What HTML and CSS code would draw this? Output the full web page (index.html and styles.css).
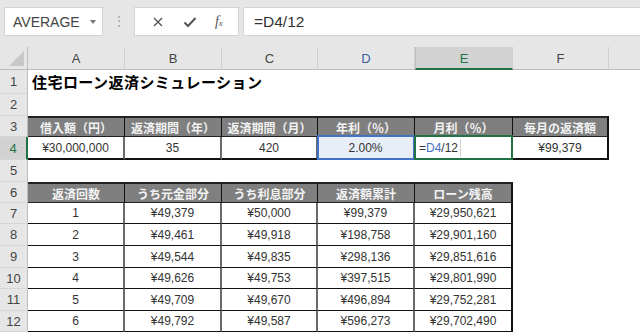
FILE: index.html
```html
<!doctype html>
<html lang="ja">

<head>
    <meta charset="UTF-8" />
    <title>住宅ローン返済シミュレーション</title>
    <link rel="stylesheet" href="styles.css">
</head>

<body>
    <div class="fbar">
        <div class="namebox">AVERAGE<span class="drop"></span></div>
        <div class="grip">⋮</div>
        <div class="btns">
            <svg width="12" height="12" viewBox="0 0 12 12"><path d="M2 2L10 10M10 2L2 10" stroke="#555" stroke-width="1.4" fill="none" /></svg>
            <svg width="14" height="12" viewBox="0 0 14 12"><path d="M1.5 6.5L5 10L12.5 2" stroke="#555" stroke-width="2" fill="none" /></svg>
            <span class="fx">f<span class="x">x</span></span>
        </div>
        <div class="formula">=D4/12</div>
    </div>

    <div class="sheet">
        <!-- column headers -->
        <div class="corner"></div>
        <div class="ch">A</div>
        <div class="ch">B</div>
        <div class="ch">C</div>
        <div class="ch ref">D</div>
        <div class="ch sel">E</div>
        <div class="ch">F</div>
        <div class="ch last"></div>

        <!-- 1 -->
        <div class="rh">1</div>
        <div class="c title">住宅ローン返済シミュレーション</div>
        <div class="c"></div><div class="c"></div><div class="c"></div><div class="c"></div><div class="c"></div><div class="c"></div>

        <!-- 2 -->
        <div class="rh">2</div>
        <div class="c"></div><div class="c"></div><div class="c"></div><div class="c"></div><div class="c"></div><div class="c"></div><div class="c"></div>

        <!-- 3 -->
        <div class="rh">3</div>
        <div class="th first">借入額（円）</div>
        <div class="th">返済期間（年）</div>
        <div class="th">返済期間（月）</div>
        <div class="th">年利（％）</div>
        <div class="th">月利（％）</div>
        <div class="th end">毎月の返済額</div>
        <div class="c"></div>

        <!-- 4 -->
        <div class="rh sel">4</div>
        <div class="td first lastrow">¥30,000,000</div>
        <div class="td lastrow">35</div>
        <div class="td lastrow">420</div>
        <div class="td lastrow refcell">2.00%</div>
        <div class="td lastrow editcell">=<span class="blue">D4</span>/12<span class="caret"></span></div>
        <div class="td lastrow end">¥99,379</div>
        <div class="c"></div>

        <!-- 5 -->
        <div class="rh">5</div>
        <div class="c"></div><div class="c"></div><div class="c"></div><div class="c"></div><div class="c"></div><div class="c"></div><div class="c"></div>

        <!-- 6 -->
        <div class="rh">6</div>
        <div class="th first">返済回数</div>
        <div class="th">うち元金部分</div>
        <div class="th">うち利息部分</div>
        <div class="th">返済額累計</div>
        <div class="th end">ローン残高</div>
        <div class="c"></div><div class="c"></div>

        <!-- 7 -->
        <div class="rh">7</div>
        <div class="td first">1</div><div class="td">¥49,379</div><div class="td">¥50,000</div><div class="td">¥99,379</div><div class="td end">¥29,950,621</div>
        <div class="c"></div><div class="c"></div>

        <div class="rh">8</div>
        <div class="td first">2</div><div class="td">¥49,461</div><div class="td">¥49,918</div><div class="td">¥198,758</div><div class="td end">¥29,901,160</div>
        <div class="c"></div><div class="c"></div>

        <div class="rh">9</div>
        <div class="td first">3</div><div class="td">¥49,544</div><div class="td">¥49,835</div><div class="td">¥298,136</div><div class="td end">¥29,851,616</div>
        <div class="c"></div><div class="c"></div>

        <div class="rh">10</div>
        <div class="td first">4</div><div class="td">¥49,626</div><div class="td">¥49,753</div><div class="td">¥397,515</div><div class="td end">¥29,801,990</div>
        <div class="c"></div><div class="c"></div>

        <div class="rh">11</div>
        <div class="td first">5</div><div class="td">¥49,709</div><div class="td">¥49,670</div><div class="td">¥496,894</div><div class="td end">¥29,752,281</div>
        <div class="c"></div><div class="c"></div>

        <div class="rh">12</div>
        <div class="td first">6</div><div class="td">¥49,792</div><div class="td">¥49,587</div><div class="td">¥596,273</div><div class="td end">¥29,702,490</div>
        <div class="c"></div><div class="c"></div>
    </div>
</body>

</html>
```

FILE: styles.css
```css
* {
    box-sizing: border-box;
}

body {
    margin: 0;
    width: 640px;
    height: 332px;
    overflow: hidden;
    background: #e6e6e6;
    font-family: "Liberation Sans", "Noto Sans CJK JP", sans-serif;
    color: #222;
}

/* formula bar */
.fbar {
    height: 47px;
    display: flex;
    align-items: flex-start;
    padding: 7px 0 0 4px;
    background: #e6e6e6;
}

.namebox {
    width: 99px;
    height: 29px;
    background: #fff;
    border: 1px solid #d4d4d4;
    display: flex;
    align-items: center;
    padding-left: 8px;
    font-size: 14px;
    color: #444;
    position: relative;
}

.drop {
    position: absolute;
    right: 6px;
    top: 12px;
    border-left: 3px solid transparent;
    border-right: 3px solid transparent;
    border-top: 4px solid #777;
}

.grip {
    width: 31px;
    text-align: center;
    color: #aaa;
    font-size: 14px;
    line-height: 29px;
}

.btns {
    width: 105px;
    height: 29px;
    background: #fff;
    border: 1px solid #d4d4d4;
    display: flex;
    align-items: center;
    justify-content: space-around;
    padding: 0 6px 0 8px;
}

.fx {
    font-family: "Liberation Serif", serif;
    font-style: italic;
    font-size: 14px;
    color: #555;
}

.fx .x {
    font-size: 9px;
}

.formula {
    margin-left: 4px;
    flex: 1;
    height: 29px;
    background: #fff;
    border: 1px solid #d4d4d4;
    border-right: 0;
    padding-left: 10px;
    font-size: 15.5px;
    line-height: 27px;
    color: #333;
}

/* grid */
.sheet {
    display: grid;
    grid-template-columns: 28px 97px 97px 96px 97px 98px 96px 31px;
    grid-template-rows: 23px 24px 22px 21px 23px 22px 21px 21px 22px 22px 21px 22px 21px;
    background: #fff;
}

.corner {
    background: #e6e6e6;
    border-right: 1px solid #bdbdbd;
    border-bottom: 1px solid #bdbdbd;
    position: relative;
}

.corner::after {
    content: "";
    position: absolute;
    right: 3px;
    bottom: 3px;
    border-left: 15px solid transparent;
    border-bottom: 15px solid #c8c8c8;
}

.ch {
    background: #e6e6e6;
    border-right: 1px solid #cfcfcf;
    border-bottom: 1px solid #bdbdbd;
    text-align: center;
    font-size: 13px;
    line-height: 23px;
    color: #444;
}

.ch.ref {
    color: #3a5f9a;
}

.ch.sel {
    background: #d2d2d2;
    color: #217346;
    border-left: 1px solid #bdbdbd;
    border-bottom: 2px solid #217346;
}

.ch.last {
    border-right: 0;
}

.rh {
    background: #e6e6e6;
    border-right: 1px solid #bdbdbd;
    border-bottom: 1px solid #d6d6d6;
    text-align: center;
    font-size: 13px;
    display: flex;
    align-items: center;
    justify-content: center;
    color: #444;
}

.rh.sel {
    background: #d2d2d2;
    color: #217346;
    border-right: 2px solid #217346;
}

.c {
    background: #fff;
}

.title {
    white-space: nowrap;
    font-family: "Noto Sans CJK JP", sans-serif;
    font-weight: bold;
    font-size: 15px;
    letter-spacing: 0.45px;
    line-height: 24px;
    padding-left: 4px;
    color: #000;
    overflow: visible;
    z-index: 1;
}

/* tables */
.th {
    background: #7f7f7f;
    color: #f2f2f2;
    font-family: "Noto Sans CJK JP", sans-serif;
    font-weight: bold;
    font-size: 12px;
    display: flex;
    align-items: center;
    justify-content: center;
    border-top: 2px solid #222;
    border-right: 1px solid #111;
    border-bottom: 1px solid #222;
}

.td {
    background: #fff;
    font-size: 12px;
    color: #333;
    display: flex;
    align-items: center;
    justify-content: center;
    border-right: 2px solid #6a6a6a;
    border-bottom: 1px solid #111;
}

.th.end,
.td.end {
    border-right: 2px solid #111;
    box-shadow: 1px 0 0 #999;
}

.td.lastrow {
    border-bottom: 2px solid #111;
}

.td.refcell {
    background: #e8eef8;
    position: relative;
}

.td.refcell::after {
    content: "";
    position: absolute;
    left: -1px;
    top: -2px;
    right: -2px;
    bottom: -2px;
    border: 2px solid #4472c4;
}

.td.editcell {
    justify-content: flex-start;
    padding-left: 4px;
    position: relative;
    z-index: 2;
}

.td.editcell::after {
    content: "";
    position: absolute;
    left: -1px;
    top: -2px;
    right: -2px;
    bottom: -2px;
    border: 2px solid #217346;
}

.blue {
    color: #4472c4;
}

.caret {
    width: 1px;
    height: 18px;
    margin-left: 2px;
    background: #d0d0d0;
}
```
